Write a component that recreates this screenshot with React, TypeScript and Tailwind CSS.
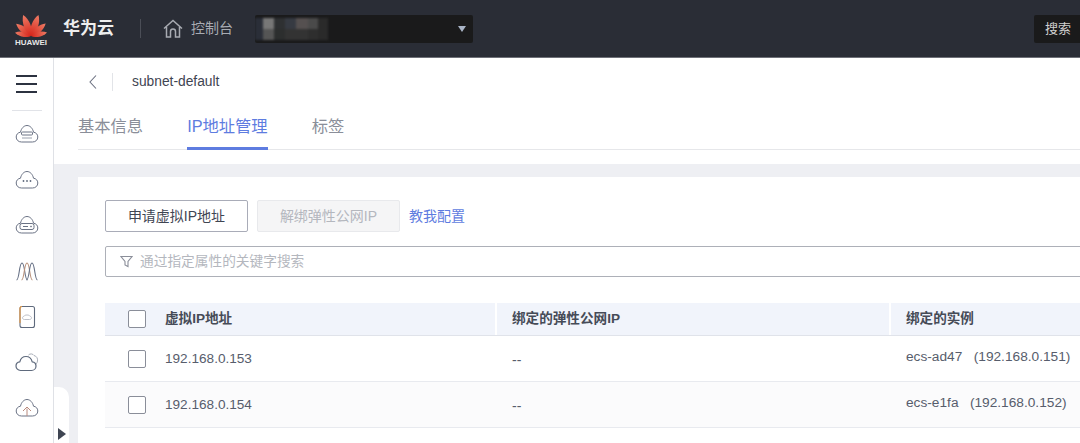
const font = { fontFamily: '"Liberation Sans", "Noto Sans CJK SC", sans-serif' };

function HuaweiLogo() {
  const petals = [-78, -50, -20, 20, 50, 78];
  return (
    <svg width="32" height="25" viewBox="0 0 32 25">
      <defs>
        <linearGradient id="petal" x1="0" y1="0" x2="0" y2="1">
          <stop offset="0" stopColor="#ee7d66" />
          <stop offset="1" stopColor="#d6241a" />
        </linearGradient>
      </defs>
      {petals.map((a) => (
        <path
          key={a}
          d="M16 24 C11 17 11.500 7 15.800 0.500 C20.500 7 21 17 16 24 Z"
          fill="url(#petal)"
          transform={`rotate(${a} 16 24) translate(16 24) scale(${Math.abs(a) > 60 ? 0.7 : Math.abs(a) > 30 ? 0.82 : 0.95}) translate(-16 -24)`}
        />
      ))}
    </svg>
  );
}

function Cloud({ children }: { children?: React.ReactNode }) {
  return (
    <svg width="24" height="24" viewBox="0 0 24 24" fill="none" stroke="#6b7385" strokeWidth="1">
      <path d="M6.500 20 C3.300 20 1.200 17.800 1.200 15 C1.200 12.400 3 10.500 5.500 10.200 C6.200 6.500 8.800 3.500 12 3.500 C15.200 3.500 17.800 6.500 18.500 10.200 C21 10.500 22.800 12.400 22.800 15 C22.800 17.800 20.700 20 17.500 20 Z" />
      {children}
    </svg>
  );
}

const sideIcons = [
  <Cloud key="ecs">
    <rect x="6.500" y="10" width="11" height="3" rx="1" />
    <path d="M7 16h10" stroke="#9aa1ae" />
  </Cloud>,
  <Cloud key="more">
    <circle cx="8.500" cy="13" r="0.900" fill="#5f6a7d" stroke="none" />
    <circle cx="12" cy="13" r="0.900" fill="#5f6a7d" stroke="none" />
    <circle cx="15.500" cy="13" r="0.900" fill="#5f6a7d" stroke="none" />
  </Cloud>,
  <Cloud key="disk">
    <rect x="5" y="10.500" width="14" height="6" rx="2" />
    <path d="M8 13.500h5" />
    <circle cx="16" cy="13.500" r="0.500" />
  </Cloud>,
  <svg key="wave" width="24" height="24" viewBox="0 0 24 24" fill="none" stroke="#667085" strokeWidth="1.100">
    <path d="M1.500 21 C4.500 21 4 4 7 4 C10 4 9.500 21 12.500 21" />
    <path d="M6.500 21 C9.500 21 9 4 12 4 C15 4 14.500 21 17.500 21" stroke="#b8907a" />
    <path d="M11.500 21 C14.500 21 14 4 17 4 C20 4 19.500 21 22.500 21" />
  </svg>,
  <svg key="phone" width="24" height="24" viewBox="0 0 24 24" fill="none">
    <rect x="5" y="1.500" width="14.500" height="21" rx="2" stroke="#5f6a7d" strokeWidth="1.100" />
    <path d="M5 18V3.500a2 2 0 0 1 2-2" stroke="#e8963c" strokeWidth="1.100" />
    <path d="M9.500 14.500 C8 14.500 7.500 13.500 7.500 12.800 C7.500 12 8.200 11.300 9 11.300 C9.500 10.300 10.500 10 12 10 C13.500 10 14.500 10.300 15 11.300 C15.800 11.300 16.500 12 16.500 12.800 C16.500 13.500 16 14.500 14.500 14.500 Z" stroke="#b5b9c2" strokeWidth="0.900" />
  </svg>,
  <svg key="clouds" width="24" height="24" viewBox="0 0 24 24" fill="none">
    <path d="M13.500 5 C15 3.300 18 3.700 19 5.500 C21.500 6 23 8.500 22.500 11 C22.200 12.800 21.500 14 20 14.500" stroke="#a9aeb8" strokeWidth="1" />
    <path d="M5.500 20.500 C3 20.500 1 18.500 1 16 C1 13.800 2.700 12 4.800 11.800 C5.500 8.800 8 6.500 11 6.500 C14 6.500 16.500 8.800 17.200 11.800 C19.300 12 21 13.800 21 16 C21 18.500 19 20.500 16.500 20.500 Z" stroke="#5f6a7d" strokeWidth="1.200" />
  </svg>,
  <Cloud key="upload">
    <path d="M12 20v-7.500M8 15l4-4 4 4" stroke="#b98a7e" />
  </Cloud>,
];

function Check() {
  return <div className="w-[18px] h-[18px] rounded-[2px] border border-[#8a8e99] bg-white" />;
}

function Row({ ip, instance, striped }: { ip: string; instance: string; striped?: boolean }) {
  return (
    <div className={`flex h-[46px] border-b border-[#e8eaef] text-[#575d6c] ${striped ? "bg-[#fbfbfc]" : "bg-white"}`}>
      <div className="w-[392px] shrink-0 flex items-center">
        <div className="w-[60px] pl-[23px]"><Check /></div>
        <span className="relative top-[1px] text-[13.600px]">{ip}</span>
      </div>
      <div className="w-[394px] shrink-0 flex items-center pl-[15px] pt-[4px] text-[14px]">--</div>
      <div className="flex-1 flex items-center pl-[15px] pb-[2px] text-[13.700px] whitespace-pre">{instance}</div>
    </div>
  );
}

// the name in the project box is pixelated out in the picture
const blurTop = [
  "w-[8px] bg-[#2a2e38]",
  "w-[11px] bg-[#777777]",
  "w-[11px] bg-[#2e3032]",
  "w-[11px] bg-[#363a42]",
  "w-[12px] bg-[#555050]",
  "w-[10px] bg-[#4a4a4a]",
  "w-[10px] bg-[#2a2a2a]",
];
const blurBottom = [
  "w-[8px] bg-[#2a2e38]",
  "w-[11px] bg-[#555555]",
  "w-[11px] bg-[#2c2e2e]",
  "w-[11px] bg-[#333333]",
  "w-[12px] bg-[#333333]",
  "w-[10px] bg-[#2e2e2e]",
  "w-[10px] bg-[#2a2a2a]",
];

export default function App() {
  return (
    <div className="w-[1080px] h-[443px] overflow-hidden flex flex-col bg-white" style={font}>
      {/* top bar */}
      <header className="h-[58px] shrink-0 bg-[#2a2d36] border-b border-[#6e7078] flex items-center">
        <div className="w-[63px] pl-[15px] flex flex-col items-start pt-[1px]">
          <HuaweiLogo />
          <span className="text-[8px] leading-[9px] font-bold text-[#e6e6e6] mt-[1px]">HUAWEI</span>
        </div>
        <span className="text-[17px] font-bold text-[#eeeeee]">华为云</span>
        <div className="w-px h-[19px] bg-[#4b4e57] ml-[26px]" />
        <svg className="ml-[21px]" width="22" height="22" viewBox="0 0 22 22" fill="none" stroke="#a8abb2" strokeWidth="1.500">
          <path d="M2 10.500 11 2.500l9 8M4.500 9v10h4v-5.500a2.500 2.500 0 0 1 5 0V19h4V9" />
        </svg>
        <span className="ml-[7px] text-[14px] text-[#a8abb2]">控制台</span>
        <div className="ml-[22px] w-[218px] h-[28px] bg-[#1a1a1b] rounded-[2px] flex items-center justify-end pr-[6px] overflow-hidden">
          <div className="flex-1 h-full flex flex-col justify-center blur-[1px]">
            <div className="flex h-[11px]">
              {blurTop.map((c) => <div key={c} className={c} />)}
            </div>
            <div className="flex h-[11px]">
              {blurBottom.map((c) => <div key={c} className={c} />)}
            </div>
          </div>
          <svg width="10" height="8" viewBox="0 0 10 8"><path d="M1 1h8L5 7Z" fill="#a9b4c6" /></svg>
        </div>
        <div className="ml-auto w-[46px] h-[28px] bg-[#1a1a1b] rounded-l-[2px] flex items-center pl-[11px] text-[13px] text-[#cfcfcf]">
          搜索
        </div>
      </header>

      <div className="flex-1 flex min-h-0">
        {/* side nav */}
        <aside className="w-[54px] shrink-0 border-r border-[#dfe1e6] flex flex-col items-center">
          <div className="h-[53px] w-[30px] flex flex-col justify-center gap-[6px] border-b border-[#e1e3e8]">
            <div className="h-[2px] w-[21px] mx-auto bg-[#2c3240]" />
            <div className="h-[2px] w-[21px] mx-auto bg-[#2c3240]" />
            <div className="h-[2px] w-[21px] mx-auto bg-[#2c3240]" />
          </div>
          <div className="flex flex-col items-center">
            {sideIcons.map((icon) => (
              <div key={icon.key} className="h-[45.700px] flex items-center justify-center">{icon}</div>
            ))}
          </div>
        </aside>

        <main className="flex-1 min-w-0 flex flex-col">
          {/* breadcrumb and tabs */}
          <div className="h-[106px] shrink-0 pl-[24px]">
            <div className="h-[48px] flex items-center">
              <svg className="ml-[9px]" width="12" height="16" viewBox="0 0 12 16" fill="none" stroke="#6b7080" strokeWidth="1.100">
                <path d="M9 1.500 3 8l6 6.500" />
              </svg>
              <div className="w-px h-[18px] bg-[#e2e4e8] ml-[13px]" />
              <span className="ml-[19px] pt-[1px] text-[13.800px] text-[#3f4552]">subnet-default</span>
            </div>
            <div className="h-[44px] flex border-b border-[#e6e7ea] text-[16.300px] text-[#8a8e99]">
              <div className="h-[44px] pt-[8px]">基本信息</div>
              <div className="ml-[44px] h-[44px] pt-[8px] border-b-[3px] border-[#5e7ce0] text-[#5e7ce0] box-border">IP地址管理</div>
              <div className="ml-[44px] h-[44px] pt-[8px]">标签</div>
            </div>
          </div>

          {/* gray page */}
          <div className="flex-1 min-h-0 flex bg-[#eeeff3] pt-[13px]">
            <div className="w-[24px] shrink-0 flex flex-col justify-end">
              <div className="w-[15px] h-[56px] bg-white rounded-tr-[10px] flex items-end pb-[3px] pl-[4px]">
                <svg width="8" height="12" viewBox="0 0 8 12"><path d="M0 0 8 6 0 12Z" fill="#3f4552" /></svg>
              </div>
            </div>
            <section className="flex-1 min-w-0 bg-white pl-[27px] pt-[23px] overflow-hidden">
              <div className="flex items-center h-[32px] text-[14px]">
                <button className="w-[143px] h-[32px] border border-[#a9acb8] rounded-[2px] text-[#3f4552]">申请虚拟IP地址</button>
                <button className="ml-[9px] w-[143px] h-[32px] border border-[#e8e9ec] rounded-[2px] bg-[#f5f5f6] text-[#b4b7be]">解绑弹性公网IP</button>
                <span className="ml-[9px] text-[#5e7ce0]">教我配置</span>
              </div>
              <div className="mt-[14px] w-[1000px] h-[31px] border border-[#adb0b8] rounded-[2px] flex items-center pl-[14px]">
                <svg width="13" height="13" viewBox="0 0 13 13" fill="none" stroke="#8a8e99" strokeWidth="1.100">
                  <path d="M1 1.500h11L8 6.500v5L5 10V6.500Z" />
                </svg>
                <span className="ml-[7px] pt-[2px] text-[13.700px] text-[#b4b7be]">通过指定属性的关键字搜索</span>
              </div>

              <div className="mt-[26px] w-[1000px]">
                <div className="flex h-[33px] bg-[#f1f4fb] border-b border-[#e0e3ea] text-[13.600px] font-bold text-[#464b57]">
                  <div className="w-[392px] shrink-0 flex items-center border-r-2 border-white">
                    <div className="w-[60px] pl-[23px]"><Check /></div>
                    <span className="pt-[1px]">虚拟IP地址</span>
                  </div>
                  <div className="w-[394px] shrink-0 flex items-center border-r-2 border-white pl-[15px] pt-[1px]">绑定的弹性公网IP</div>
                  <div className="flex-1 flex items-center pl-[15px] pt-[1px]">绑定的实例</div>
                </div>
                <Row ip="192.168.0.153" instance="ecs-ad47   (192.168.0.151)" />
                <Row ip="192.168.0.154" instance="ecs-e1fa   (192.168.0.152)" striped />
              </div>
            </section>
          </div>
        </main>
      </div>
    </div>
  );
}
